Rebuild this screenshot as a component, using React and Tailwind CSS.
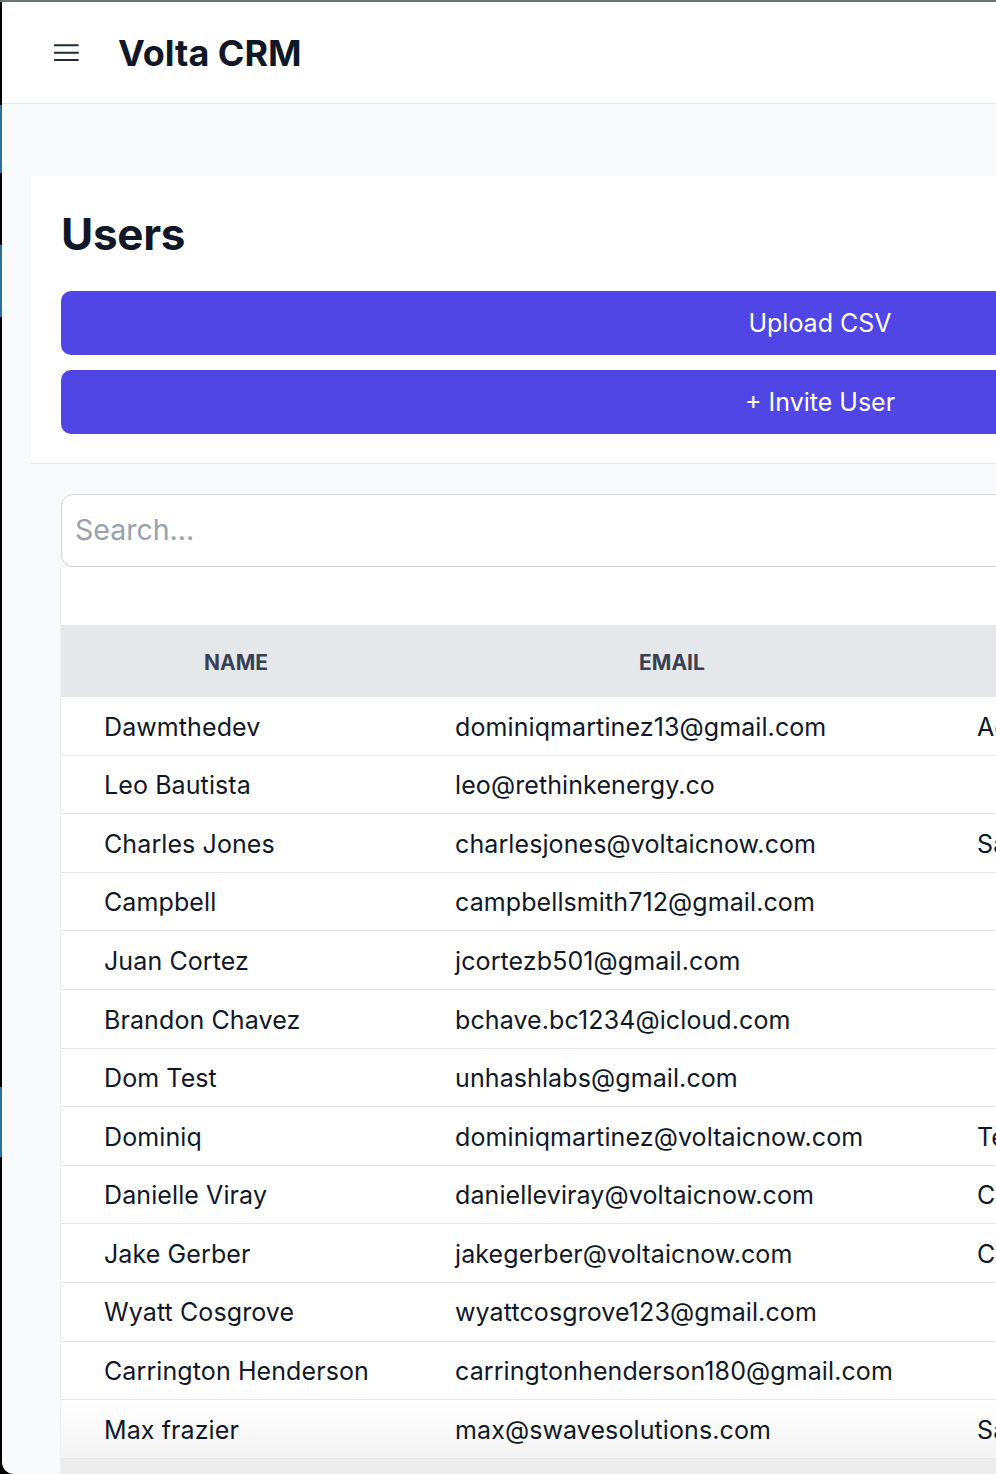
import React from "react";

const users = [
    { name: "Dawmthedev", email: "dominiqmartinez13@gmail.com", role: "Admin" },
    { name: "Leo Bautista", email: "leo@rethinkenergy.co", role: "" },
    { name: "Charles Jones", email: "charlesjones@voltaicnow.com", role: "Sales" },
    { name: "Campbell", email: "campbellsmith712@gmail.com", role: "" },
    { name: "Juan Cortez", email: "jcortezb501@gmail.com", role: "" },
    { name: "Brandon Chavez", email: "bchave.bc1234@icloud.com", role: "" },
    { name: "Dom Test", email: "unhashlabs@gmail.com", role: "" },
    { name: "Dominiq", email: "dominiqmartinez@voltaicnow.com", role: "Tech" },
    { name: "Danielle Viray", email: "danielleviray@voltaicnow.com", role: "Closer" },
    { name: "Jake Gerber", email: "jakegerber@voltaicnow.com", role: "Closer" },
    { name: "Wyatt Cosgrove", email: "wyattcosgrove123@gmail.com", role: "" },
    { name: "Carrington Henderson", email: "carringtonhenderson180@gmail.com", role: "" },
    { name: "Max frazier", email: "max@swavesolutions.com", role: "Sales" },
];

const MenuIcon = () => (
    <svg width="25" height="17" viewBox="0 0 25 17" fill="none">
        <rect x="0" y="0.3" width="24.7" height="2" rx="0.5" fill="#1f2937" />
        <rect x="0" y="7.7" width="24.7" height="2" rx="0.5" fill="#1f2937" />
        <rect x="0" y="15" width="24.7" height="2" rx="0.5" fill="#1f2937" />
    </svg>
);

const App = () => {
    return (
        <div className="w-[996px] h-[1474px] overflow-hidden bg-black font-['Inter',sans-serif]">
            <div className="h-[2px] bg-[#6e7378]" />
            <div className="flex h-[1472px]">
                {/* window edge */}
                <div className="w-[2px] flex flex-col flex-shrink-0">
                    <div className="h-[103px] bg-black" />
                    <div className="h-[68px] bg-[#2f6f9f]" />
                    <div className="h-[72px] bg-black" />
                    <div className="h-[72px] bg-[#2f6f9f]" />
                    <div className="h-[770px] bg-black" />
                    <div className="h-[70px] bg-[#2f6f9f]" />
                    <div className="flex-1 bg-black" />
                </div>

                <div className="w-[1640px] flex-shrink-0 bg-[#f9fafb] rounded-bl-[12px] overflow-hidden flex flex-col">
                    <header className="h-[102px] bg-white border-b border-gray-200 flex items-center pl-[52px] gap-[39px] flex-shrink-0">
                        <MenuIcon />
                        <h1 className="text-[36px] font-bold text-gray-900">Volta CRM</h1>
                    </header>

                    <main className="pt-[72px] pl-[29px] flex-1 flex flex-col">
                        <div className="w-[1578px] bg-white border-b border-gray-200 px-[30px] pt-[34px] pb-[29px]">
                            <h2 className="text-[44px] leading-[48px] font-bold text-gray-900 tracking-[-0.3px]">Users</h2>
                            <div className="mt-[33px] flex flex-col gap-[15px]">
                                <button className="h-[64px] w-full rounded-[10px] bg-[#4f46e5] text-white text-[25px] pt-[2px]">
                                    Upload CSV
                                </button>
                                <button className="h-[64px] w-full rounded-[10px] bg-[#4f46e5] text-white text-[25px] pt-[2px]">
                                    + Invite User
                                </button>
                            </div>
                        </div>

                        <div className="pl-[30px] pt-[30px] w-[1578px] flex-1 flex flex-col">
                            <div className="h-[73px] border border-gray-300 rounded-[12px] bg-white flex items-center px-[13px]">
                                <input
                                    className="w-full text-[28.5px] text-gray-900 placeholder:text-gray-400 outline-none bg-transparent"
                                    placeholder="Search..."
                                />
                            </div>

                            <div className="bg-white shadow-[0_0_2px_rgba(0,0,0,0.12)] pt-[58px] flex-1 flex flex-col">
                                <div className="h-[72px] pt-[3px] bg-gray-200 flex items-center text-[21px] font-bold text-gray-700 uppercase">
                                    <div className="w-[350px] text-center">Name</div>
                                    <div className="w-[522px] text-center">Email</div>
                                    <div className="w-[400px] text-center">Role</div>
                                    <div className="flex-1 text-center">Actions</div>
                                </div>
                                {users.map((user, i) => (
                                    <div
                                        key={user.email}
                                        className={`h-[58.6px] pt-[3px] flex items-center text-[25px] tracking-[0.1px] text-gray-900 border-b border-gray-200 ${i === users.length - 1 ? "bg-gradient-to-b from-white to-[#f3f3f3]" : ""}`}
                                    >
                                        <div className="w-[350px] px-[43px] whitespace-nowrap">{user.name}</div>
                                        <div className="w-[522px] px-[44px] whitespace-nowrap">{user.email}</div>
                                        <div className="w-[400px] px-[44px] whitespace-nowrap">{user.role}</div>
                                    </div>
                                ))}
                                <div className="flex-1 bg-[#ececec]" />
                            </div>
                        </div>
                    </main>
                </div>
            </div>
        </div>
    );
};

export default App;
